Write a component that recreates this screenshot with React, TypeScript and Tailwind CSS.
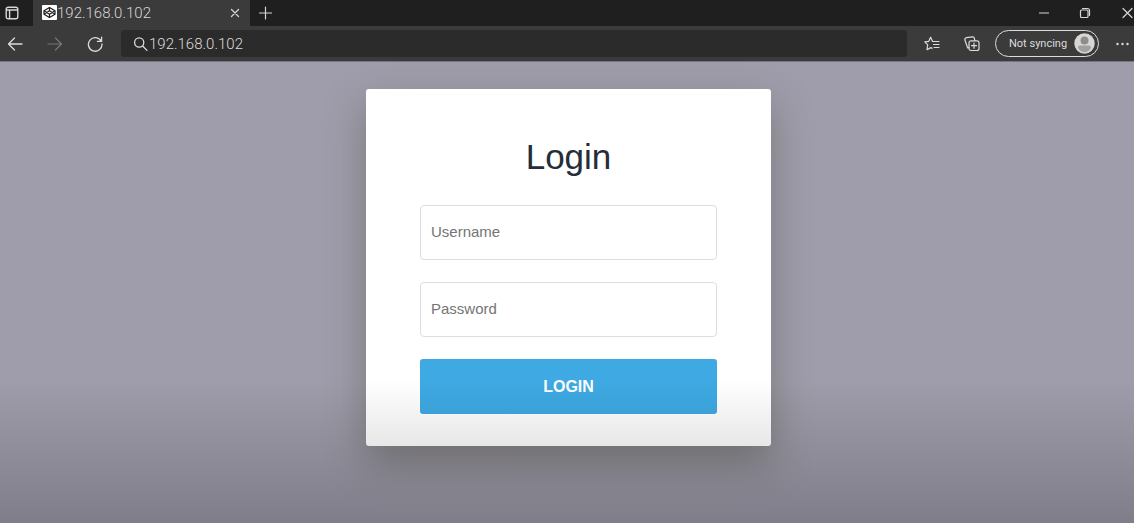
import { useState } from "react";
import type { ReactNode } from "react";

type IconProps = { className?: string; size?: number; stroke?: number; children: ReactNode };

function Icon({ className = "", size = 16, stroke = 1.2, children }: IconProps) {
  return (
    <svg
      width={size}
      height={size}
      viewBox={`0 0 ${size} ${size}`}
      fill="none"
      stroke="currentColor"
      strokeWidth={stroke}
      strokeLinecap="round"
      strokeLinejoin="round"
      className={`shrink-0 ${className}`}
      aria-hidden="true"
    >
      {children}
    </svg>
  );
}

function TabStrip() {
  return (
    <div className="flex h-[26px] items-center bg-[#1f1f1f] pb-px pr-px text-[#d6d6d6]">
      <button type="button" aria-label="Tab actions" className="ml-[5px] mr-[14px]">
        <Icon size={14} stroke={1.4}>
          <rect x="1.2" y="1.2" width="11.6" height="11.6" rx="2" />
          <path d="M1.5 4h11M4.6 4.5v8" />
        </Icon>
      </button>

      <div className="-mb-px flex w-[217px] items-center self-stretch bg-[#3b3b3b] pb-px pl-[9px] pr-2">
        <svg width="15" height="15" viewBox="0 0 15 15" className="shrink-0" aria-hidden="true">
          <rect width="15" height="15" rx="1" fill="#fff" />
          <g fill="none" stroke="#1c1c1c" strokeWidth="1.2" strokeLinejoin="round">
            <path d="M7.5 2.500 13 5.800v3.400l-5.500 3.300L2 9.200V5.800z" />
            <path d="M2 5.800l5.500 3.400L13 5.800M2 9.200l5.500-3.400L13 9.200M7.500 2.500v3.300M7.500 9.200v3.300" />
          </g>
        </svg>
        <span className="flex-1 font-['Roboto',sans-serif] text-[15px] font-light leading-5">
          192.168.0.102
        </span>
        <button type="button" aria-label="Close tab">
          <Icon size={14} stroke={1.3}>
            <path d="M3.5 3.5l7 7M10.5 3.5l-7 7" />
          </Icon>
        </button>
      </div>

      <button type="button" aria-label="New tab" className="ml-2">
        <Icon size={14} stroke={1.2}>
          <path d="M7.5 1v12M1.5 7h12" />
        </Icon>
      </button>

      <div className="ml-auto flex gap-[30px]">
        <button type="button" aria-label="Minimize">
          <Icon size={12}>
            <path d="M2.500 6h9" />
          </Icon>
        </button>
        <button type="button" aria-label="Restore">
          <Icon size={12}>
            <rect x="1.500" y="3" width="7.500" height="7.500" rx="1" />
            <path d="M3.5 1.5h5a2 2 0 0 1 2 2v5" />
          </Icon>
        </button>
        <button type="button" aria-label="Close window">
          <Icon size={12}>
            <path d="M2 1.500l9 9M11 1.500l-9 9" />
          </Icon>
        </button>
      </div>
    </div>
  );
}

function Toolbar() {
  const [address, setAddress] = useState("192.168.0.102");

  return (
    <div className="flex h-[35px] items-center bg-[#3b3b3b] pl-[7px] pr-[5px] text-[#dcdcdc]">
      <div className="flex gap-6">
        <button type="button" aria-label="Back">
          <Icon stroke={1.3}>
            <path d="M15 8H1.5M7.5 2 1.5 8l6 6" />
          </Icon>
        </button>
        <button type="button" aria-label="Forward" className="text-[#777777]">
          <Icon stroke={1.2}>
            <path d="M1 8h13.5M8.5 2l6 6-6 6" />
          </Icon>
        </button>
        <button type="button" aria-label="Refresh">
          <Icon stroke={1.3}>
            <path d="M14.2 5.2A6.8 6.8 0 1 0 15 8M14.6 1.2v4.2h-4.2" />
          </Icon>
        </button>
      </div>

      <label className="ml-[18px] flex h-[27px] min-w-0 flex-1 items-center rounded-[3px] bg-[#2b2b2b] pl-3">
        <Icon stroke={1.3}>
          <circle cx="6.2" cy="6.5" r="4.6" />
          <path d="M9.6 10l4.4 4.4" />
        </Icon>
        <input
          type="text"
          aria-label="Address"
          value={address}
          onChange={(e) => setAddress(e.target.value)}
          className="min-w-0 flex-1 bg-transparent font-['Roboto',sans-serif] text-[15px] font-light leading-5 outline-none"
        />
      </label>

      <div className="ml-[17px] flex gap-6">
        <button type="button" aria-label="Favorites">
          <Icon>
            <path d="M9.500 5.500 8.500 5.300 6.600 1.200 4.800 5.300l-4 .6 2.900 2.900-.7 4.900 3.800-2.100 1.400.7M9.500 5.500H15M9.500 8.500H15M10 11.500h5" />
          </Icon>
        </button>
        <button type="button" aria-label="Collections">
          <Icon>
            <rect x="5" y="4.8" width="10" height="9.7" rx="2" />
            <path d="M10 7.2v5M7.5 9.7h5M5 11.6 3.7 12 .9 4a2 2 0 0 1 1.3-2.3L8.6.9a1.6 1.6 0 0 1 1.7 1.2l.6 2.5" />
          </Icon>
        </button>
      </div>

      <button
        type="button"
        className="ml-[15px] flex h-[27px] w-[104px] items-center justify-between rounded-full border border-[#dcdcdc] pl-[13px] pr-[3px]"
      >
        <span className="whitespace-nowrap font-['Roboto',sans-serif] text-[11px] leading-4">
          Not syncing
        </span>
        <svg width="21" height="21" viewBox="0 0 21 21" className="shrink-0" aria-hidden="true">
          <circle cx="10.5" cy="10.5" r="10.2" fill="#d8d6d5" />
          <circle cx="10.5" cy="7.6" r="4" fill="#8f8d8c" />
          <path d="M4 14.6a2 2 0 0 1 2-2h9a2 2 0 0 1 2 2c-1 3-3.6 4.6-6.5 4.6S5 17.6 4 14.6z" fill="#a3a1a0" />
        </svg>
      </button>

      <button type="button" aria-label="Settings and more" className="ml-4">
        <svg width="14" height="14" viewBox="0 0 14 14" fill="currentColor" aria-hidden="true">
          <circle cx="2.5" cy="7" r="1.2" />
          <circle cx="7.5" cy="7" r="1.2" />
          <circle cx="12.5" cy="7" r="1.2" />
        </svg>
      </button>
    </div>
  );
}

const fields = [
  { id: "username", type: "text", label: "Username" },
  { id: "password", type: "password", label: "Password" },
];

function LoginForm() {
  return (
    <form
      onSubmit={(e) => e.preventDefault()}
      className="w-full max-w-[405px] rounded-[3px] bg-white px-[54px] pb-8 pt-12 shadow-[0_16px_40px_rgba(60,60,40,0.38)]"
    >
      <h1 className="mb-7 text-center text-[35px] leading-10 text-[#242d38]">Login</h1>
      <div className="flex flex-col gap-[22px]">
        {fields.map((field) => (
          <input
            key={field.id}
            id={field.id}
            name={field.id}
            type={field.type}
            placeholder={field.label}
            aria-label={field.label}
            className="h-[55px] w-full rounded-[4px] border border-[#dedede] bg-white px-[10px] pb-[3px] text-[15px] text-[#242d38] placeholder:text-[#757575]"
          />
        ))}
        <button
          type="submit"
          className="h-[55px] w-full rounded-[3px] bg-[#3ea9e3] text-base font-bold text-white"
        >
          LOGIN
        </button>
      </div>
    </form>
  );
}

export default function App() {
  return (
    <div className="relative flex min-h-screen flex-col bg-[#9f9dab] font-['Liberation_Sans',Arial,sans-serif]">
      <header>
        <TabStrip />
        <Toolbar />
      </header>
      <main className="flex flex-1 items-start justify-center border-t border-[#77757f] pb-8 pl-[3px] pt-[27px]">
        <LoginForm />
      </main>
      {/* dark fade along the bottom edge */}
      <div className="pointer-events-none absolute inset-x-0 bottom-0 h-36 bg-linear-to-t from-black/20 to-transparent" />
    </div>
  );
}
